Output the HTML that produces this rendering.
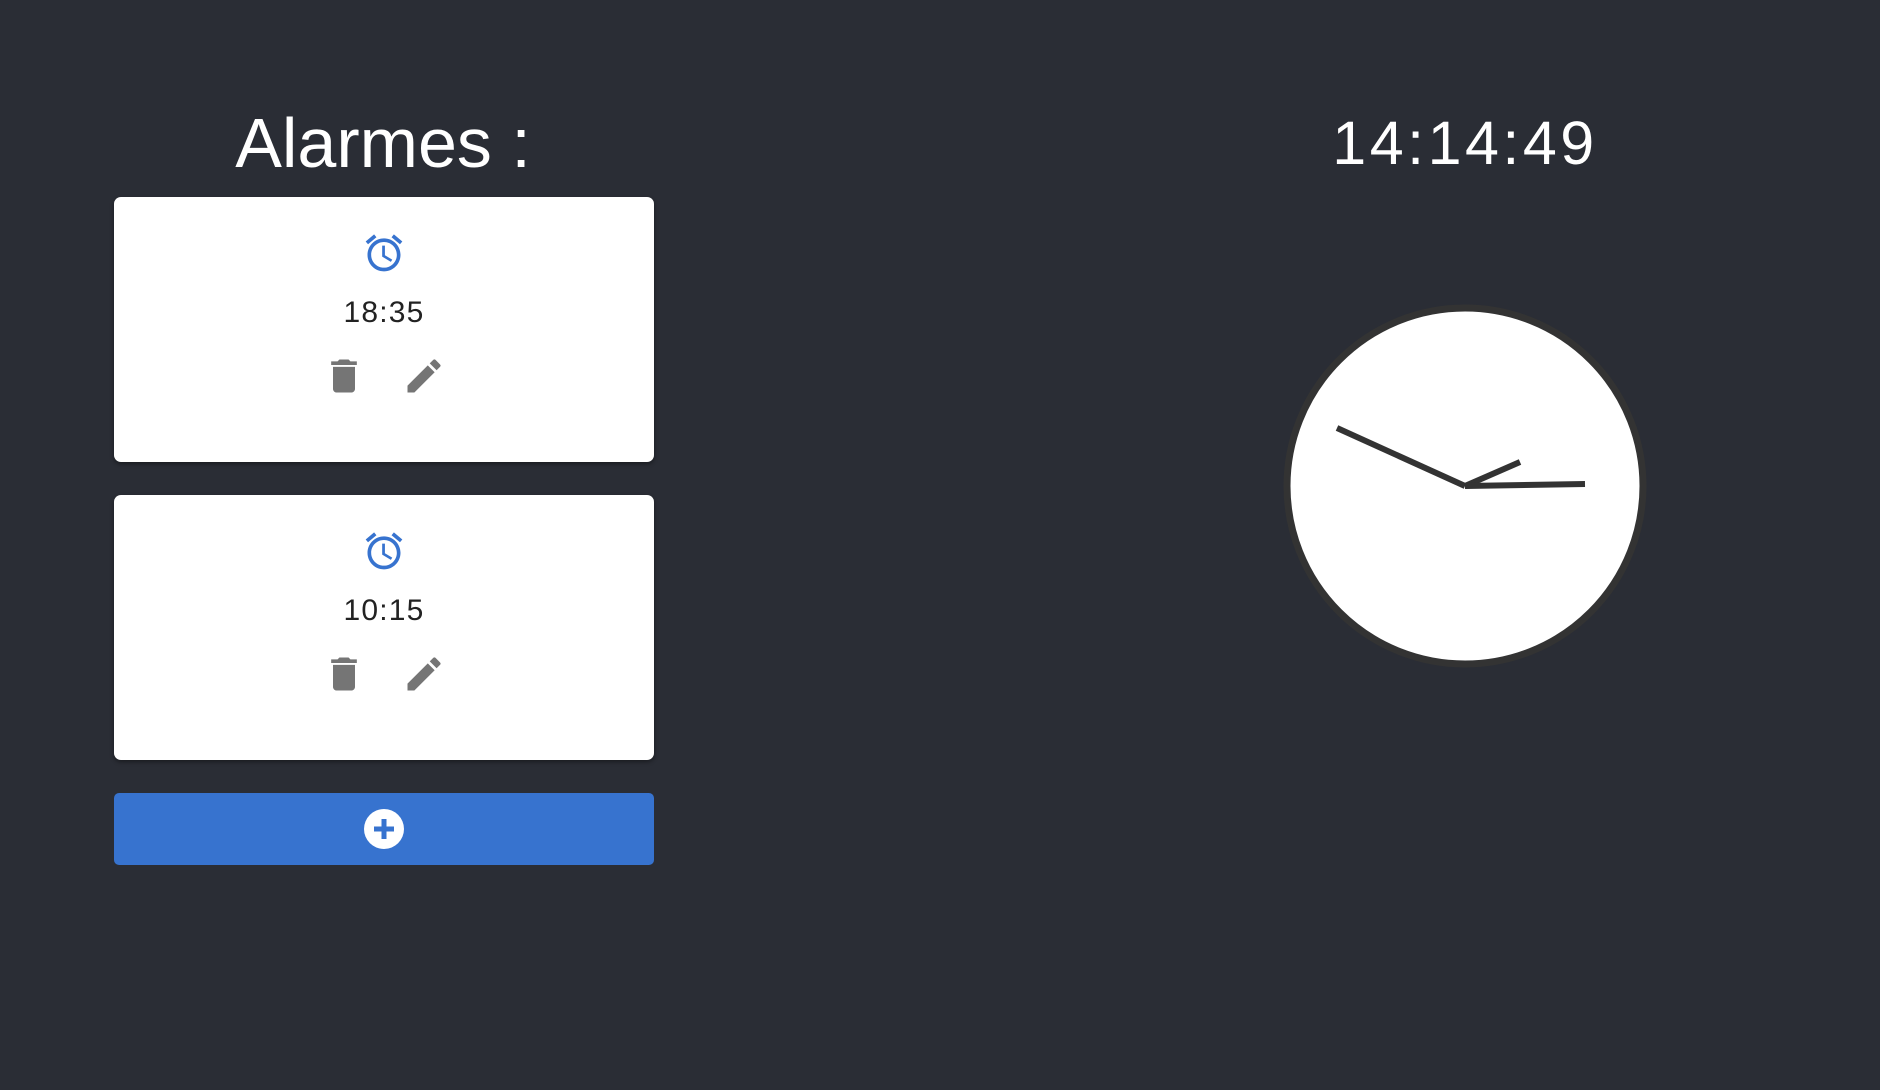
<!DOCTYPE html>
<html><head><style>
body{margin:0;width:1880px;height:1090px;background:#2a2d35;font-family:"Liberation Sans",sans-serif;position:relative;overflow:hidden}
.t{position:absolute;color:#fff;text-align:center}
.card{position:absolute;left:114px;width:540px;height:265px;background:#fff;border-radius:7px;box-shadow:0 2px 4px rgba(0,0,0,.4)}
.card .tm{position:absolute;left:0;right:0;text-align:center;font-size:30px;color:#222;letter-spacing:1.2px}
.btn{position:absolute;left:114px;top:793px;width:540px;height:72px;background:#3773cf;border-radius:5px}
</style></head><body>
<div class="t" style="left:83px;width:600px;top:103px;font-size:70px">Alarmes :</div>
<div class="t" style="left:1165px;width:600px;top:108px;font-size:61px;letter-spacing:3.5px">14:14:49</div>

<div class="card" style="top:197px">
<svg style="position:absolute;left:248px;top:34px" width="44" height="44" viewBox="0 0 24 24"><path fill="#3773cf" d="M22 5.72l-4.6-3.86-1.29 1.53 4.6 3.86L22 5.72zM7.88 3.39L6.6 1.86 2 5.71l1.29 1.53 4.59-3.85zM12.5 8H11v6l4.75 2.85.75-1.23-4-2.37V8zM12 4c-4.97 0-9 4.03-9 9s4.02 9 9 9c4.97 0 9-4.03 9-9s-4.03-9-9-9zm0 16c-3.87 0-7-3.13-7-7s3.13-7 7-7 7 3.13 7 7-3.13 7-7 7z"/></svg>
<div class="tm" style="top:99px">18:35</div>
<svg style="position:absolute;left:208px;top:157px" width="44" height="44" viewBox="0 0 24 24"><path fill="#757575" d="M6 19c0 1.1.9 2 2 2h8c1.1 0 2-.9 2-2V7H6v12zM19 4h-3.5l-1-1h-5l-1 1H5v2h14V4z"/></svg>
<svg style="position:absolute;left:288px;top:157px" width="44" height="44" viewBox="0 0 24 24"><path fill="#757575" d="M3 17.25V21h3.75L17.81 9.94l-3.75-3.75L3 17.25zM20.71 7.04a1 1 0 000-1.41l-2.34-2.34a1 1 0 00-1.41 0l-1.83 1.83 3.75 3.75 1.83-1.83z"/></svg>
</div>

<div class="card" style="top:495px">
<svg style="position:absolute;left:248px;top:34px" width="44" height="44" viewBox="0 0 24 24"><path fill="#3773cf" d="M22 5.72l-4.6-3.86-1.29 1.53 4.6 3.86L22 5.72zM7.88 3.39L6.6 1.86 2 5.71l1.29 1.53 4.59-3.85zM12.5 8H11v6l4.75 2.85.75-1.23-4-2.37V8zM12 4c-4.97 0-9 4.03-9 9s4.02 9 9 9c4.97 0 9-4.03 9-9s-4.03-9-9-9zm0 16c-3.87 0-7-3.13-7-7s3.13-7 7-7 7 3.13 7 7-3.13 7-7 7z"/></svg>
<div class="tm" style="top:99px">10:15</div>
<svg style="position:absolute;left:208px;top:157px" width="44" height="44" viewBox="0 0 24 24"><path fill="#757575" d="M6 19c0 1.1.9 2 2 2h8c1.1 0 2-.9 2-2V7H6v12zM19 4h-3.5l-1-1h-5l-1 1H5v2h14V4z"/></svg>
<svg style="position:absolute;left:288px;top:157px" width="44" height="44" viewBox="0 0 24 24"><path fill="#757575" d="M3 17.25V21h3.75L17.81 9.94l-3.75-3.75L3 17.25zM20.71 7.04a1 1 0 000-1.41l-2.34-2.34a1 1 0 00-1.41 0l-1.83 1.83 3.75 3.75 1.83-1.83z"/></svg>
</div>

<div class="btn">
<svg style="position:absolute;left:250px;top:16px" width="40" height="40" viewBox="0 0 40 40"><circle cx="20" cy="20" r="20" fill="#fff"/><rect x="10" y="17.5" width="20" height="5" fill="#3773cf"/><rect x="17.5" y="10" width="5" height="20" fill="#3773cf"/></svg>
</div>

<svg style="position:absolute;left:0;top:0" width="1880" height="1090">
<circle cx="1465" cy="486" r="178" fill="#fff" stroke="#333" stroke-width="7"/>
<g stroke="#333" stroke-width="6" fill="none">
<line x1="1465" y1="486" x2="1337" y2="428"/>
<line x1="1465" y1="486" x2="1520" y2="462"/>
<line x1="1465" y1="486" x2="1585" y2="484"/>
</g>
</svg>
</body></html>
